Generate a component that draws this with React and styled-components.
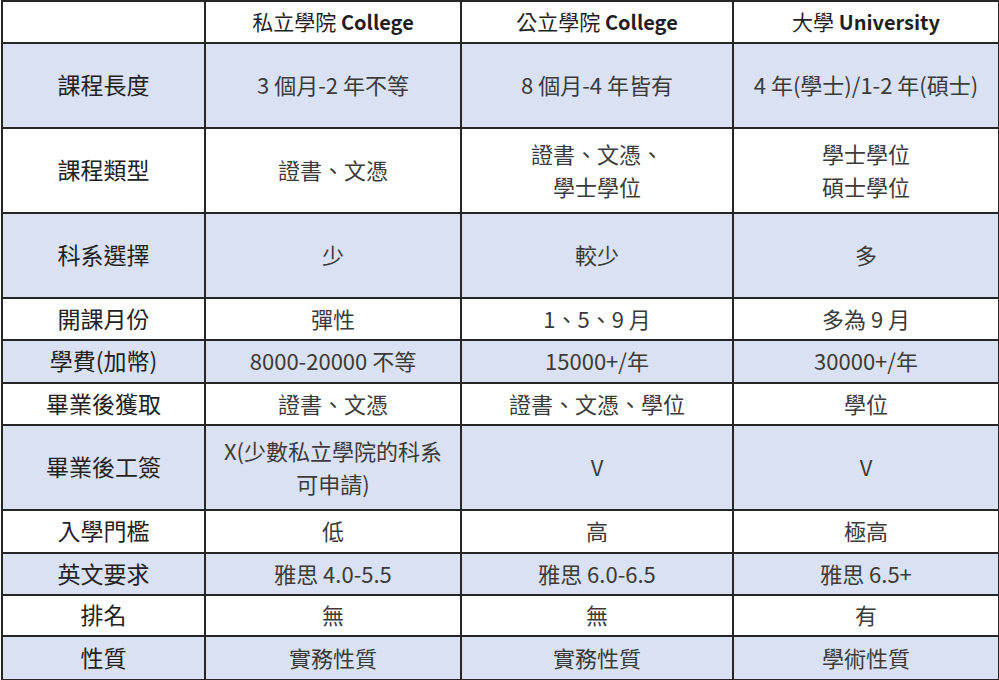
import React from "react";
import styled, { createGlobalStyle } from "styled-components";

const Global = createGlobalStyle`
  html, body { margin: 0; padding: 0; background: #ffffff; }
  body { font-family: "Noto Sans CJK TC", Lato, sans-serif; }
`;

const Page = styled.div`
  padding: 0 0 0 1px;
  width: 999px;
  height: 680px;
  overflow: hidden;
  box-sizing: border-box;
`;

const Table = styled.table`
  border-collapse: collapse;
  table-layout: fixed;
  width: 997px;
  font-family: "Noto Sans CJK TC", Lato, sans-serif;
  font-size: 22px;
`;

const Row = styled.tr`
  height: ${p => p.h}px;
  background: ${p => (p.shaded ? "#d9e1f2" : "#ffffff")};
`;

const HeadCell = styled.th`
  border: 2px solid #262626;
  font-weight: 400;
  font-size: 21px;
  color: #1f1f1f;
  text-align: center;
  vertical-align: middle;
  padding: 0 0 2px;
  line-height: 33px;

  b {
    font-weight: 700;
    font-size: 20px;
  }
`;

const Label = styled.td`
  border: 2px solid #262626;
  color: #222222;
  font-size: 23px;
  text-align: center;
  vertical-align: middle;
  padding: 0 0 2px;
  line-height: 33px;
`;

const Cell = styled.td`
  border: 2px solid #262626;
  color: #3b3b3b;
  text-align: center;
  vertical-align: middle;
  padding: 0 4px 2px;
  line-height: 33px;
`;

const rows = [
  { h: 85, label: "課程長度", cells: ["3 個月-2 年不等", "8 個月-4 年皆有", "4 年(學士)/1-2 年(碩士)"] },
  { h: 85, label: "課程類型", cells: ["證書、文憑", ["證書、文憑、", "學士學位"], ["學士學位", "碩士學位"]] },
  { h: 85, label: "科系選擇", cells: ["少", "較少", "多"] },
  { h: 42, label: "開課月份", cells: ["彈性", "1、5、9 月", "多為 9 月"] },
  { h: 43, label: "學費(加幣)", cells: ["8000-20000 不等", "15000+/年", "30000+/年"] },
  { h: 42, label: "畢業後獲取", cells: ["證書、文憑", "證書、文憑、學位", "學位"] },
  { h: 85, label: "畢業後工簽", cells: [["X(少數私立學院的科系", "可申請)"], "V", "V"] },
  { h: 43, label: "入學門檻", cells: ["低", "高", "極高"] },
  { h: 42, label: "英文要求", cells: ["雅思 4.0-5.5", "雅思 6.0-6.5", "雅思 6.5+"] },
  { h: 41, label: "排名", cells: ["無", "無", "有"] },
  { h: 44, label: "性質", cells: ["實務性質", "實務性質", "學術性質"] },
];

function Content({ value }) {
  if (Array.isArray(value)) {
    return value.map((line, i) => <div key={i}>{line}</div>);
  }
  return value;
}

export default function App() {
  return (
    <>
      <Global />
      <Page>
        <Table>
          <colgroup>
            <col style={{ width: 203 }} />
            <col style={{ width: 256 }} />
            <col style={{ width: 272 }} />
            <col style={{ width: 266 }} />
          </colgroup>
          <tbody>
            <Row h={42}>
              <HeadCell />
              <HeadCell>私立學院 <b>College</b></HeadCell>
              <HeadCell>公立學院 <b>College</b></HeadCell>
              <HeadCell>大學 <b>University</b></HeadCell>
            </Row>
            {rows.map((r, i) => (
              <Row key={r.label} h={r.h} shaded={i % 2 === 0}>
                <Label>{r.label}</Label>
                {r.cells.map((c, j) => (
                  <Cell key={j}>
                    <Content value={c} />
                  </Cell>
                ))}
              </Row>
            ))}
          </tbody>
        </Table>
      </Page>
    </>
  );
}
